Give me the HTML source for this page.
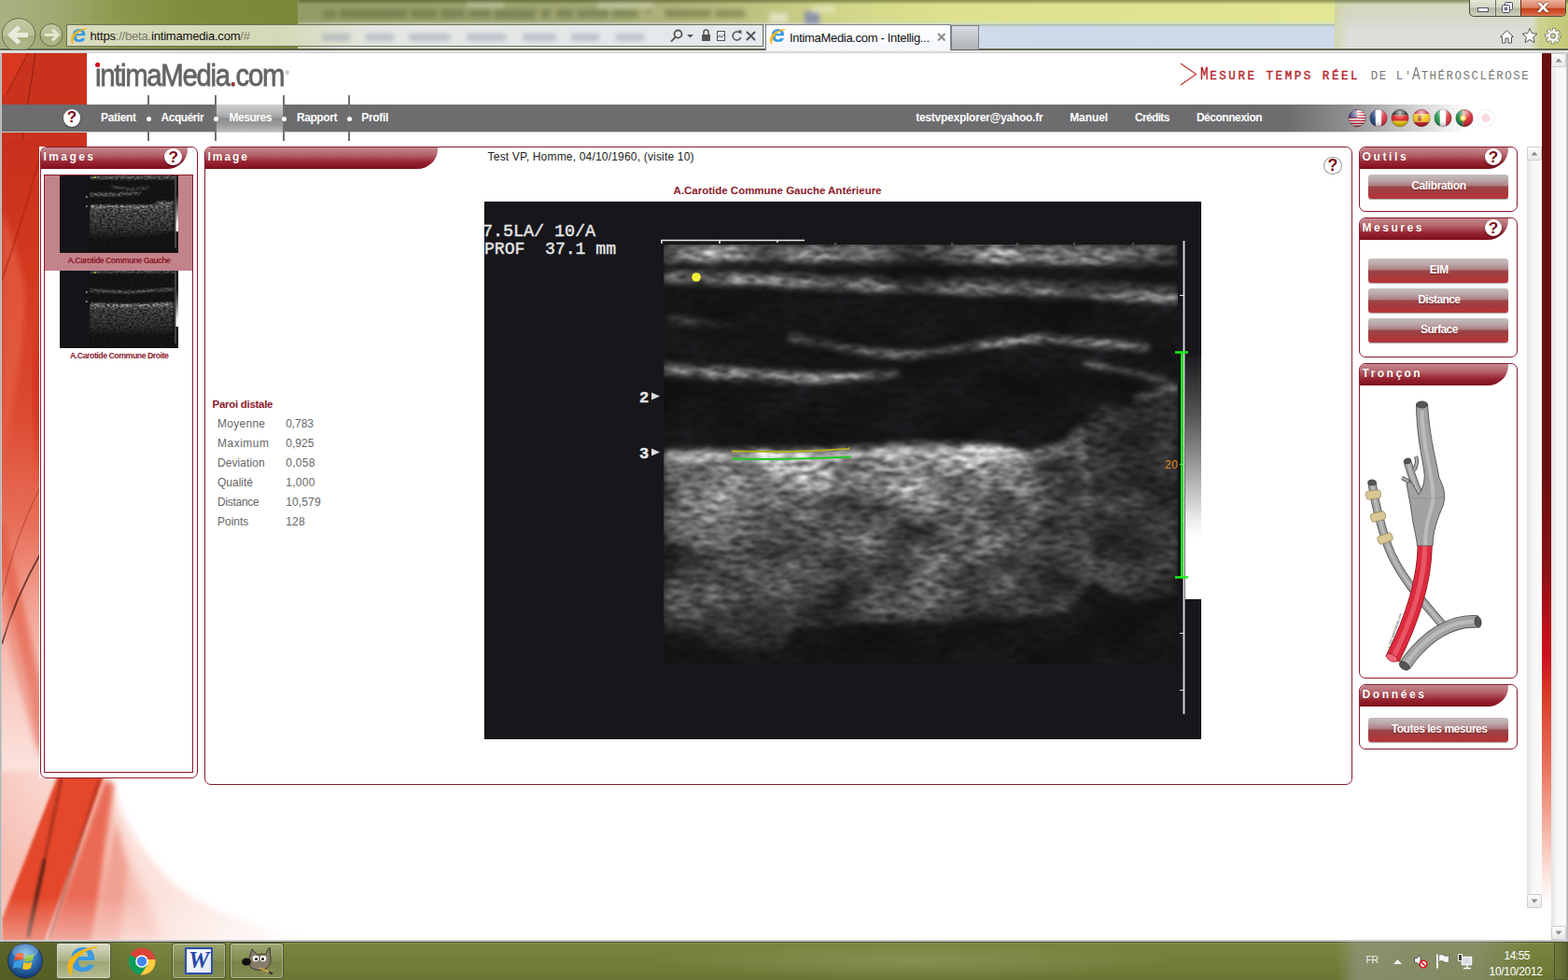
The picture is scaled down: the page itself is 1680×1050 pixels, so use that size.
<!DOCTYPE html>
<html lang="fr"><head><meta charset="utf-8"><title>IntimaMedia.com - Intelligence</title>
<style>
html,body{margin:0;padding:0;background:#fff}
body{width:1680px;height:1050px;position:relative;overflow:hidden;font-family:"Liberation Sans",sans-serif}
div,svg{position:absolute;white-space:pre}
.abs{position:absolute}
.gl{position:absolute}
#logo{position:absolute;color:#636466;transform-origin:0 50%;letter-spacing:0;-webkit-text-stroke:.8px #636466}
.help{border-radius:50%;background:#fff;color:#7a0c18;font-weight:bold;text-align:center;font-family:"Liberation Sans",sans-serif}
.panel{box-sizing:border-box;border:1px solid #8b1a2b;background:#fff}
.tab{background:linear-gradient(180deg,#c58a90 0,#b5626b 35%,#96222f 70%,#7f0f1c 100%);border-bottom-right-radius:22px 21px}
.btn{border-radius:3px;background:linear-gradient(180deg,#c6bebe 0,#bba9aa 22%,#ae8285 44%,#9a4447 52%,#a63a3c 75%,#b73638 100%);box-shadow:0 1px 1px rgba(0,0,0,.35)}
</style></head>
<body>
<svg width="0" height="0" style="position:absolute;left:0;top:0"><defs>
<filter id="spk" x="0" y="0" width="100%" height="100%" color-interpolation-filters="sRGB">
<feGaussianBlur in="SourceGraphic" stdDeviation="3" result="bl"/>
<feTurbulence type="fractalNoise" baseFrequency="0.014 0.022" numOctaves="2" seed="11" result="c"/>
<feColorMatrix in="c" type="matrix" values="1.600 0 0 0 -0.300  1.600 0 0 0 -0.300  1.600 0 0 0 -0.300  0 0 0 0 1" result="cg"/>
<feComposite in="bl" in2="cg" operator="arithmetic" k1="1.400" k2="0.300" k3="0" k4="0" result="t"/>
<feTurbulence type="fractalNoise" baseFrequency="0.072 0.190" numOctaves="2" seed="7" result="n"/>
<feColorMatrix in="n" type="matrix" values="1.100 0 0 0 -0.050  1.100 0 0 0 -0.050  1.100 0 0 0 -0.050  0 0 0 0 1" result="ng"/>
<feComposite in="t" in2="ng" operator="arithmetic" k1="1.600" k2="0.120" k3="0" k4="0.055" result="o"/>
<feGaussianBlur in="o" stdDeviation="0.800"/>
</filter>
<filter id="spk2" x="0" y="0" width="100%" height="100%" color-interpolation-filters="sRGB">
<feGaussianBlur in="SourceGraphic" stdDeviation="0.900" result="bl"/>
<feTurbulence type="fractalNoise" baseFrequency="0.350 0.550" numOctaves="2" seed="3" result="n"/>
<feColorMatrix in="n" type="matrix" values="1.900 0 0 0 -0.450  1.900 0 0 0 -0.450  1.900 0 0 0 -0.450  0 0 0 0 1" result="ng"/>
<feComposite in="bl" in2="ng" operator="arithmetic" k1="1.150" k2="0.200" k3="0" k4="0.050"/>
</filter>
<filter id="ub" x="-5%" y="-200%" width="110%" height="500%"><feGaussianBlur stdDeviation="2.500"/></filter>
<linearGradient id="tgb" x1="0" y1="0" x2="0" y2="1"><stop offset="0" stop-color="#222"/><stop offset=".5" stop-color="#999"/><stop offset=".8" stop-color="#fff"/><stop offset="1" stop-color="#fff"/></linearGradient>
<linearGradient id="tg1" x1="0" y1="0" x2="0" y2="1"><stop offset="0" stop-color="#7a7a7a"/><stop offset=".2" stop-color="#484848"/><stop offset=".7" stop-color="#2e2e2e"/><stop offset="1" stop-color="#0c0c0c"/></linearGradient>
<linearGradient id="tg2" x1="0" y1="0" x2="0" y2="1"><stop offset="0" stop-color="#707070"/><stop offset=".2" stop-color="#3a3a3a"/><stop offset=".7" stop-color="#262626"/><stop offset="1" stop-color="#0c0c0c"/></linearGradient>
<linearGradient id="ug1" gradientUnits="userSpaceOnUse" x1="0" y1="268" x2="0" y2="490"><stop offset="0" stop-color="#8a8a8a"/><stop offset=".1" stop-color="#747474"/><stop offset=".3" stop-color="#555"/><stop offset=".6" stop-color="#414141"/><stop offset=".78" stop-color="#303030"/><stop offset=".9" stop-color="#1c1c1e"/><stop offset="1" stop-color="#08080a"/></linearGradient>
<linearGradient id="ug2" gradientUnits="userSpaceOnUse" x1="590" y1="0" x2="745" y2="0"><stop offset="0" stop-color="#08080a" stop-opacity="0"/><stop offset=".3" stop-color="#08080a" stop-opacity=".3"/><stop offset="1" stop-color="#08080a" stop-opacity=".4"/></linearGradient>
</defs></svg>
<svg class="abs" style="left:2px;top:57px" width="440" height="951" viewBox="2 57 440 951">
<defs>
<linearGradient id="lg1" gradientUnits="userSpaceOnUse" x1="0" y1="150" x2="0" y2="840"><stop offset="0" stop-color="#c9301c"/><stop offset=".2" stop-color="#d2391f"/><stop offset=".42" stop-color="#dc4a30"/><stop offset=".6" stop-color="#e8705a"/><stop offset=".72" stop-color="#f2a292"/><stop offset=".86" stop-color="#f8cdc4"/><stop offset="1" stop-color="#fce6e1"/></linearGradient>
<linearGradient id="lg3" gradientUnits="userSpaceOnUse" x1="60" y1="1000" x2="250" y2="880"><stop offset="0" stop-color="#f6bfb4"/><stop offset=".45" stop-color="#fbddd6"/><stop offset="1" stop-color="#fff"/></linearGradient>
<linearGradient id="lgw" x1="0" y1="0" x2="0" y2="1"><stop offset="0" stop-color="#fff" stop-opacity="0"/><stop offset="1" stop-color="#fff" stop-opacity=".42"/></linearGradient>
<filter id="b1"><feGaussianBlur stdDeviation=".7"/></filter>
<filter id="b3"><feGaussianBlur stdDeviation="3"/></filter>
<filter id="b6"><feGaussianBlur stdDeviation="6"/></filter>
<filter id="b2"><feGaussianBlur stdDeviation="1.500"/></filter>
<clipPath id="pgc"><rect x="2" y="57" width="440" height="951"/></clipPath>
</defs>
<g clip-path="url(#pgc)">
<rect x="2" y="57" width="91" height="100" fill="#c9321d"/>
<rect x="2" y="150" width="40" height="690" fill="url(#lg1)"/>
<path d="M2 57L30 57 8 100 2 104z" fill="#d8381f"/>
<path d="M30 57L7 100M38 57L24 150" stroke="#7a1a10" stroke-width="1" fill="none" opacity=".7"/>
<path d="M-4 560C10 620 30 700 50 800" stroke="#e04a32" stroke-width="16" fill="none" opacity=".55" filter="url(#b3)"/>
<path d="M2 690C12 655 28 620 44 592" stroke="#3a1410" stroke-width="1.800" fill="none" opacity=".7" filter="url(#b1)"/>
<path d="M2 640C10 600 24 560 44 520" stroke="#8a2a1c" stroke-width="1.200" fill="none" opacity=".45"/>
<path d="M2 225C14 260 26 290 27 320 26 380 12 440 2 500z" fill="#ea6a50" opacity=".55" filter="url(#b3)"/>
<path d="M44 330C34 380 30 430 44 520z" fill="#cc2414" opacity=".5" filter="url(#b3)"/>
<path d="M4 640C14 700 30 760 46 810" stroke="#e8705c" stroke-width="7" fill="none" opacity=".5" filter="url(#b3)"/>
<path d="M2 300C16 260 30 215 42 170" stroke="#a3220f" stroke-width="2" fill="none" opacity=".5"/>
<!-- lower swoosh -->
<rect x="2" y="833" width="440" height="175" fill="#fff"/>
<path d="M-10 826L117 826C128 878 160 925 192 951 228 980 290 1000 380 1012L-10 1012z" fill="url(#lg3)" filter="url(#b3)"/>
<path d="M112 833C122 880 140 930 175 1008L100 1008 118 900z" fill="#f4b3a6" opacity=".7" filter="url(#b6)"/>
<path d="M2 985L62 831 112 831 47 1010 2 1010z" fill="#e4462b" filter="url(#b2)"/>
<path d="M50 1010L112 836 122 840 100 1010z" fill="#ea6a55" filter="url(#b3)"/>
<path d="M98 1010L124 880 136 930 128 1010z" fill="#f09a8a" opacity=".8" filter="url(#b3)"/>
<path d="M30 1004L48 920" stroke="#2a1410" stroke-width="4" filter="url(#b2)" opacity=".75" fill="none"/><path d="M48 920L66 834" stroke="#5a1a12" stroke-width="2.500" filter="url(#b2)" opacity=".55" fill="none"/>
<path d="M53 1006L106 836" stroke="#6a1a12" stroke-width="1.500" filter="url(#b2)" opacity=".7" fill="none"/>
<rect x="2" y="960" width="440" height="48" fill="url(#lgw)"/>
</g>
</svg>
<div class="abs" style="left:42px;top:157px;width:1594px;height:676px;background:#fff"></div>
<div class="abs" style="left:93px;top:57px;width:1559px;height:100px;background:#fff"></div>

<div id="logo" style="left:102px;top:62px;font-size:33.5px;line-height:37px;transform:scaleX(0.8756);letter-spacing:-1.5px;">intimaMedia<span style="color:#d0021b">.</span>com</div>
<div class="abs" style="left:102px;top:67px;width:5px;height:5px;border-radius:50%;background:#d80a22"></div>
<div style="left:305.50px;top:75.00px;font-size:6px;line-height:6px;letter-spacing:0.000px;color:#666;">®</div>
<svg class="abs" style="left:1262px;top:65px" width="24" height="30" viewBox="1262 65 24 30"><path d="M1265 68L1281.500 79.500 1265 91" fill="none" stroke="#c8403c" stroke-width="1.400"/></svg>
<div id="slogan" style="left:1286.2px;top:68px;font-family:'Liberation Mono',monospace;text-transform:uppercase;white-space:pre;line-height:24px;height:24px;font-size:12.5px;color:#b5262c;-webkit-text-stroke:.4px #b5262c;letter-spacing:2.55px"><span style="display:inline-block;width:7.50px;margin:0 3.05px 0 -0.5px;font-size:19.5px;letter-spacing:0;transform:scaleX(.74);transform-origin:0 100%">M</span>esure temps réel</div>
<div id="slogan2" style="left:1468.8px;top:68px;font-family:'Liberation Mono',monospace;text-transform:uppercase;white-space:pre;line-height:24px;height:24px;font-size:12.5px;color:#77787a;letter-spacing:1.47px">de l'<span style="display:inline-block;width:7.50px;margin:0 1.97px 0 -0.5px;font-size:19.5px;letter-spacing:0;transform:scaleX(.74);transform-origin:0 100%">A</span>thérosclérose</div>
<div class="abs" style="left:2px;top:112px;width:1650px;height:29px;background:linear-gradient(90deg,#6d6d6f 0,#6d6d6f 1376px,#8e8e90 1440px,#c6c6c7 1500px,#fff 1570px,#fff 100%)"></div>
<div class="abs" style="left:2px;top:141px;width:1560px;height:1px;background:linear-gradient(90deg,#cdd2d2 0,#cdd2d2 1380px,#fff 1560px)"></div>
<div class="abs" style="left:231px;top:112px;width:73px;height:29px;background:linear-gradient(180deg,#cfcfcf 0,#bdbdbd 25%,#a0a0a0 48%,#8d8d8d 52%,#9b9b9b 75%,#bcbcbc 100%)"></div>
<div class="abs" style="left:158px;top:102px;width:2px;height:49px;background:#727274"></div>
<div class="abs" style="left:156.5px;top:124.500px;width:5px;height:5px;border-radius:50%;background:#fff"></div>
<div class="abs" style="left:230px;top:102px;width:2px;height:49px;background:#727274"></div>
<div class="abs" style="left:228.5px;top:124.500px;width:5px;height:5px;border-radius:50%;background:#fff"></div>
<div class="abs" style="left:303px;top:102px;width:2px;height:49px;background:#727274"></div>
<div class="abs" style="left:301.5px;top:124.500px;width:5px;height:5px;border-radius:50%;background:#fff"></div>
<div class="abs" style="left:373px;top:102px;width:2px;height:49px;background:#727274"></div>
<div class="abs" style="left:371.5px;top:124.500px;width:5px;height:5px;border-radius:50%;background:#fff"></div>
<div class="help" style="left:67.8px;top:117.2px;width:18.4px;height:18.4px;font-size:17.0px;line-height:18.9px;box-shadow:0 1px 2px rgba(0,0,0,.5);">?</div>
<div style="left:108.00px;top:118.90px;font-size:12px;line-height:14px;letter-spacing:-0.335px;color:#fff;font-weight:bold;">Patient</div>
<div style="left:172.50px;top:118.90px;font-size:12px;line-height:14px;letter-spacing:-0.464px;color:#fff;font-weight:bold;">Acquérir</div>
<div style="left:245.40px;top:118.90px;font-size:12px;line-height:14px;letter-spacing:-0.449px;color:#fff;font-weight:bold;">Mesures</div>
<div style="left:318.00px;top:118.90px;font-size:12px;line-height:14px;letter-spacing:-0.433px;color:#fff;font-weight:bold;">Rapport</div>
<div style="left:387.30px;top:118.90px;font-size:12px;line-height:14px;letter-spacing:-0.314px;color:#fff;font-weight:bold;">Profil</div>
<div style="left:981.20px;top:118.90px;font-size:12px;line-height:14px;letter-spacing:-0.243px;color:#fff;font-weight:bold;">testvpexplorer@yahoo.fr</div>
<div style="left:1146.20px;top:118.90px;font-size:12px;line-height:14px;letter-spacing:-0.088px;color:#fff;font-weight:bold;">Manuel</div>
<div style="left:1216.00px;top:118.90px;font-size:12px;line-height:14px;letter-spacing:-0.674px;color:#fff;font-weight:bold;">Crédits</div>
<div style="left:1281.90px;top:118.90px;font-size:12px;line-height:14px;letter-spacing:-0.465px;color:#fff;font-weight:bold;">Déconnexion</div>
<svg class="abs" style="left:1440px;top:114px" width="170" height="26" viewBox="1440 114 170 26"><defs><radialGradient id="gloss" cx=".5" cy=".2" r=".75"><stop offset="0" stop-color="#fff" stop-opacity=".75"/><stop offset=".55" stop-color="#fff" stop-opacity=".1"/><stop offset="1" stop-color="#000" stop-opacity=".28"/></radialGradient><clipPath id="cus"><circle cx="1454" cy="126.500" r="9.300"/></clipPath><clipPath id="cfr"><circle cx="1477" cy="126.500" r="9.300"/></clipPath><clipPath id="cde"><circle cx="1500" cy="126.500" r="9.300"/></clipPath><clipPath id="ces"><circle cx="1523" cy="126.500" r="9.300"/></clipPath><clipPath id="cit"><circle cx="1546" cy="126.500" r="9.300"/></clipPath><clipPath id="cpt"><circle cx="1569" cy="126.500" r="9.300"/></clipPath><clipPath id="cjp"><circle cx="1592" cy="126.500" r="9.300"/></clipPath></defs><g clip-path="url(#cus)"><rect x="1444.5" y="117.00" width="19" height="1.46" fill="#c8102e"/><rect x="1444.5" y="118.46" width="19" height="1.46" fill="#fff"/><rect x="1444.5" y="119.92" width="19" height="1.46" fill="#c8102e"/><rect x="1444.5" y="121.38" width="19" height="1.46" fill="#fff"/><rect x="1444.5" y="122.85" width="19" height="1.46" fill="#c8102e"/><rect x="1444.5" y="124.31" width="19" height="1.46" fill="#fff"/><rect x="1444.5" y="125.77" width="19" height="1.46" fill="#c8102e"/><rect x="1444.5" y="127.23" width="19" height="1.46" fill="#fff"/><rect x="1444.5" y="128.69" width="19" height="1.46" fill="#c8102e"/><rect x="1444.5" y="130.15" width="19" height="1.46" fill="#fff"/><rect x="1444.5" y="131.62" width="19" height="1.46" fill="#c8102e"/><rect x="1444.5" y="133.08" width="19" height="1.46" fill="#fff"/><rect x="1444.5" y="134.54" width="19" height="1.46" fill="#c8102e"/></g><g clip-path="url(#cus)"><rect x="1444" y="116" width="10" height="10.500" fill="#3c3b6e"/></g><g clip-path="url(#cfr)"><rect x="1467.50" y="116" width="6.33" height="21" fill="#1b3a7a"/><rect x="1473.83" y="116" width="6.33" height="21" fill="#fff"/><rect x="1480.17" y="116" width="6.33" height="21" fill="#d8283a"/></g><g clip-path="url(#cde)"><rect x="1490.5" y="117.00" width="19" height="6.33" fill="#111"/><rect x="1490.5" y="123.33" width="19" height="6.33" fill="#d41a1a"/><rect x="1490.5" y="129.67" width="19" height="6.33" fill="#f4c400"/></g><g clip-path="url(#ces)"><rect x="1513.5" y="117.00" width="19" height="5.13" fill="#c8192c"/><rect x="1513.5" y="122.13" width="19" height="8.74" fill="#f5c218"/><rect x="1513.5" y="130.87" width="19" height="5.13" fill="#c8192c"/></g><rect x="1519" y="123.500" width="4" height="6" fill="#b0552a"/><g clip-path="url(#cit)"><rect x="1536.50" y="116" width="6.33" height="21" fill="#1a8f45"/><rect x="1542.83" y="116" width="6.33" height="21" fill="#fff"/><rect x="1549.17" y="116" width="6.33" height="21" fill="#cf2b37"/></g><g clip-path="url(#cpt)"><rect x="1559.50" y="116" width="7.98" height="21" fill="#17803d"/><rect x="1567.48" y="116" width="11.02" height="21" fill="#d3202c"/></g><circle cx="1567.500" cy="126.500" r="3.200" fill="#f5d21c"/><circle cx="1567.500" cy="126.500" r="1.600" fill="#fff"/><circle cx="1592" cy="126.500" r="9.300" fill="#fff" stroke="#f0f0f0"/><circle cx="1592" cy="126.500" r="4.500" fill="#f7d9dd"/><circle cx="1454" cy="126.500" r="9.300" fill="url(#gloss)" stroke="rgba(0,0,0,.25)" stroke-width=".8"/><circle cx="1477" cy="126.500" r="9.300" fill="url(#gloss)" stroke="rgba(0,0,0,.25)" stroke-width=".8"/><circle cx="1500" cy="126.500" r="9.300" fill="url(#gloss)" stroke="rgba(0,0,0,.25)" stroke-width=".8"/><circle cx="1523" cy="126.500" r="9.300" fill="url(#gloss)" stroke="rgba(0,0,0,.25)" stroke-width=".8"/><circle cx="1546" cy="126.500" r="9.300" fill="url(#gloss)" stroke="rgba(0,0,0,.25)" stroke-width=".8"/><circle cx="1569" cy="126.500" r="9.300" fill="url(#gloss)" stroke="rgba(0,0,0,.25)" stroke-width=".8"/></svg>
<div class="panel" style="left:43px;top:157px;width:169px;height:677px;border-radius:7px"></div>
<div class="tab" style="left:44px;top:158px;width:157px;height:23px;border-top-left-radius:6px"></div>
<div style="left:46.50px;top:161.20px;font-size:12px;line-height:14px;letter-spacing:2.429px;color:#fff;font-weight:bold;text-shadow:0 0 1px rgba(90,0,10,.6);">Images</div>
<div class="help" style="left:176.4px;top:158.7px;width:18.6px;height:18.6px;font-size:17.2px;line-height:19.1px;box-shadow:0 1px 2px rgba(0,0,0,.5);">?</div>
<div class="abs" style="left:47px;top:187px;width:160px;height:641px;box-sizing:border-box;border:1px solid #8b1a2b;background:#fff"></div>
<div class="abs" style="left:48px;top:188px;width:158px;height:102px;background:#c3838a"></div>
<svg class="abs" style="left:64px;top:188px" width="127" height="83" viewBox="0 0 127 83"><rect width="127" height="83" fill="#141419"/><clipPath id="tcl"><rect x="32" y="0" width="91" height="83"/></clipPath><g clip-path="url(#tcl)"><g filter="url(#spk2)"><rect x="20" y="-5" width="120" height="95" fill="#08080a"/><rect x="32" y="0" width="92" height="4" fill="#5a5a5a"/><path d="M32 19h25l30-1v2l-30 2H32z" fill="#6a6a6a"/><path d="M55 12l20 3 20-2" stroke="#606060" stroke-width="1.500" fill="none"/><path d="M32 32h68l5-4 17 0v32l-20 4-40 3-30 0z" fill="url(#tg1)"/><path d="M32 33h68" stroke="#aaa" stroke-width="2"/></g></g><rect x="123.500" y="0" width="1" height="78" fill="#777"/><rect x="124.500" y="22" width="2.500" height="38" fill="url(#tgb)"/><rect x="37" y="1.500" width="1.500" height="1.500" fill="#e8e020"/><path d="M28 22l2.500 1-2.500 1zM28 32l2.500 1-2.500 1z" fill="#bbb"/></svg>
<div style="left:72.60px;top:274.00px;font-size:8.8px;line-height:10px;letter-spacing:-0.595px;color:#8b1a2b;font-weight:bold;">A.Carotide Commune Gauche</div>
<svg class="abs" style="left:64px;top:290px" width="127" height="83" viewBox="0 0 127 83"><rect width="127" height="83" fill="#141419"/><clipPath id="tcl"><rect x="32" y="0" width="91" height="83"/></clipPath><g clip-path="url(#tcl)"><g filter="url(#spk2)"><rect x="20" y="-5" width="120" height="95" fill="#08080a"/><rect x="32" y="0" width="92" height="2" fill="#666"/><path d="M32 20l40 2 50-3v2l-50 3-40-2z" fill="#7a7a7a"/><path d="M32 36l50 1 40-2v32l-30 2-60-2z" fill="url(#tg2)"/><path d="M32 36l50 1 40-2" stroke="#999" stroke-width="2" fill="none"/></g></g><rect x="123.500" y="0" width="1" height="78" fill="#777"/><rect x="124.500" y="22" width="2.500" height="38" fill="url(#tgb)"/><rect x="37" y="1.500" width="1.500" height="1.500" fill="#e8e020"/><path d="M28 22l2.500 1-2.500 1zM28 32l2.500 1-2.500 1z" fill="#bbb"/></svg>
<div style="left:75.00px;top:376.00px;font-size:8.8px;line-height:10px;letter-spacing:-0.493px;color:#8b1a2b;font-weight:bold;">A.Carotide Commune Droite</div>
<div class="panel" style="left:219px;top:157px;width:1230px;height:684px;border-radius:7px"></div>
<div class="tab" style="left:220px;top:158px;width:249px;height:23px;border-top-left-radius:6px"></div>
<div style="left:222.50px;top:161.20px;font-size:12px;line-height:14px;letter-spacing:1.955px;color:#fff;font-weight:bold;text-shadow:0 0 1px rgba(90,0,10,.6);">Image</div>
<div class="help" style="left:1418.4px;top:168.1px;width:19.2px;height:19.2px;font-size:17.8px;line-height:19.7px;box-shadow:0 0 0 1px #999 inset;">?</div>
<div style="left:522.60px;top:160.60px;font-size:12px;line-height:14px;letter-spacing:0.187px;color:#222;">Test VP, Homme, 04/10/1960, (visite 10)</div>
<div style="left:721.60px;top:197.80px;font-size:11.5px;line-height:12px;letter-spacing:-0.009px;color:#8b1a2b;font-weight:bold;">A.Carotide Commune Gauche Antérieure</div>
<div style="left:227.50px;top:426.60px;font-size:11.5px;line-height:12px;letter-spacing:-0.282px;color:#8b1a2b;font-weight:bold;">Paroi distale</div>
<div style="left:233.00px;top:447.20px;font-size:12px;line-height:14px;letter-spacing:0.272px;color:#666;">Moyenne</div>
<div style="left:306.20px;top:447.20px;font-size:12px;line-height:14px;letter-spacing:-0.057px;color:#666;">0,783</div>
<div style="left:233.00px;top:468.20px;font-size:12px;line-height:14px;letter-spacing:0.500px;color:#666;">Maximum</div>
<div style="left:306.20px;top:468.20px;font-size:12px;line-height:14px;letter-spacing:0.068px;color:#666;">0,925</div>
<div style="left:233.00px;top:489.20px;font-size:12px;line-height:14px;letter-spacing:0.072px;color:#666;">Deviation</div>
<div style="left:306.20px;top:489.20px;font-size:12px;line-height:14px;letter-spacing:0.318px;color:#666;">0,058</div>
<div style="left:233.00px;top:510.20px;font-size:12px;line-height:14px;letter-spacing:-0.004px;color:#666;">Qualité</div>
<div style="left:306.20px;top:510.20px;font-size:12px;line-height:14px;letter-spacing:0.318px;color:#666;">1,000</div>
<div style="left:233.00px;top:531.20px;font-size:12px;line-height:14px;letter-spacing:-0.284px;color:#666;">Distance</div>
<div style="left:306.20px;top:531.20px;font-size:12px;line-height:14px;letter-spacing:0.139px;color:#666;">10,579</div>
<div style="left:233.00px;top:552.20px;font-size:12px;line-height:14px;letter-spacing:-0.010px;color:#666;">Points</div>
<div style="left:306.20px;top:552.20px;font-size:12px;line-height:14px;letter-spacing:0.189px;color:#666;">128</div>
<svg class="abs" style="left:519px;top:216px" width="768" height="576" viewBox="0 0 768 576"><rect width="768" height="576" fill="#000"/><rect x="1" y="1" width="766" height="574" fill="#16161b"/><clipPath id="sect"><rect x="192" y="46" width="551" height="450"/></clipPath><g clip-path="url(#sect)"><g filter="url(#spk)"><rect x="150" y="20" width="640" height="500" fill="#08080a"/><path d="M192 46H743V70L640 67 540 66 400 66 300 64 192 65z" fill="#626262"/><path d="M192 73L743 90V96L192 79z" fill="#3a3a3a"/><path d="M192 78L743 99V108L192 86z" fill="#747474"/><path d="M195 122l50 5 25 4-25 4-50-6z" fill="#3a3a3a"/><path d="M329 146C350 150 370 154 391 157 415 162 440 165 458 164 480 162 500 158 521 155 540 152 560 150 575 149 585 147 595 146 602 146 612 147 620 148 629 149L709 156" stroke="#6e6e6e" stroke-width="6.500" fill="none" stroke-linecap="round"/><path d="M440 164.500C470 164 500 158 530 154 560 150 590 146 610 146.500" stroke="#8a8a8a" stroke-width="5" fill="none" stroke-linecap="round"/><path d="M192 175L271 179 360 184 445 183 445 186 360 194 271 191 192 186z" fill="#727272"/><path d="M642 173L731 191" stroke="#5c5c5c" stroke-width="5" fill="none"/><path d="M696 213L743 197" stroke="#7a7a7a" stroke-width="8" fill="none"/><path d="M640 240L662 216 700 224 743 204V422L700 428 655 410z" fill="#363636"/><path d="M192 267L391 264 467 258 539 260 584 269 619 258 640 240 650 300 655 400 630 437 560 448 400 452 330 456 322 479 192 480z" fill="url(#ug1)"/><path d="M192 270L391 267 467 261 539 263 584 272 612 265V274L584 281 539 273 467 271 391 278 192 282z" fill="#a4a4a4"/><rect x="590" y="200" width="160" height="260" fill="url(#ug2)"/></g><path d="M192 276L391 273 467 267 539 269 580 277" stroke="#dcdcdc" stroke-width="6" fill="none" opacity=".45" filter="url(#ub)"/></g><rect x="1" y="1" width="191" height="574" fill="#16161b"/><path d="M189 41.500H343M190 41v4M252 41v4M314 41v3" stroke="#e8e8e8" stroke-width="1.500" fill="none"/><path d="M376 44v2M501 44v2M571 44v2M632 44v2M695 44v2" stroke="#999" stroke-width="1" fill="none"/><rect x="751" y="164" width="17" height="262" fill="url(#gb)"/><defs><linearGradient id="gb" x1="0" y1="0" x2="0" y2="1"><stop offset="0" stop-color="#1a1a1e"/><stop offset=".25" stop-color="#555"/><stop offset=".45" stop-color="#999"/><stop offset=".68" stop-color="#eee"/><stop offset=".75" stop-color="#fff"/><stop offset="1" stop-color="#fff"/></linearGradient></defs><path d="M749.500 42V549" stroke="#e4e4e4" stroke-width="1.800"/><path d="M745 100.500h4M745 281.500h4M746 342h3M745 462.500h4M745 523.500h4" stroke="#ddd" stroke-width="1.200"/><path d="M747.300 161V403M740 161.500h14M740 402.500h14" stroke="#1ef01e" stroke-width="2.600" fill="none"/><circle cx="227" cy="81" r="4.800" fill="#f1ee35"/><path d="M265 267.500l60 .5 30-1 35-2 1-1.500" stroke="#b4ac20" stroke-width="1.800" fill="none"/><path d="M265 275.500l40 .5 30-.5 20-.5 38-1.500" stroke="#22c822" stroke-width="1.800" fill="none"/><path d="M179 204.500l9 4-9 4zM179 264.500l9 4-9 4z" fill="#ddd"/><g font-family="Liberation Mono,monospace" fill="#e6e6e6" stroke="#e6e6e6" stroke-width=".45"><text x="-2" y="36.500" font-size="18.500" textLength="121" lengthAdjust="spacingAndGlyphs">7.5LA/ 10/A</text><text x="0" y="56" font-size="18.500" textLength="141" lengthAdjust="spacingAndGlyphs" style="white-space:pre">PROF  37.1 mm</text><text x="166" y="215" font-size="17" font-weight="bold">2</text><text x="166" y="275" font-size="17" font-weight="bold">3</text></g><text x="729" y="286" font-size="12" font-family="Liberation Sans,sans-serif" fill="#e8861c" textLength="14">20</text></svg>
<div class="panel" style="left:1456px;top:157px;width:170px;height:70px;border-radius:7px"></div>
<div class="tab" style="left:1457px;top:158px;width:159px;height:23px;border-top-left-radius:6px"></div>
<div style="left:1459.50px;top:161.20px;font-size:12px;line-height:14px;letter-spacing:2.640px;color:#fff;font-weight:bold;text-shadow:0 0 1px rgba(90,0,10,.6);">Outils</div>
<div class="help" style="left:1590.7px;top:158.7px;width:18.6px;height:18.6px;font-size:17.2px;line-height:19.1px;box-shadow:0 1px 2px rgba(0,0,0,.5);">?</div>
<div class="btn" style="left:1466px;top:187px;width:150px;height:26px"></div><div style="left:1512.30px;top:191.80px;font-size:12px;line-height:14px;letter-spacing:-0.397px;color:#fff;font-weight:bold;text-shadow:0 1px 1px rgba(80,0,0,.5);">Calibration</div>
<div class="panel" style="left:1456px;top:233px;width:170px;height:150px;border-radius:7px"></div>
<div class="tab" style="left:1457px;top:234px;width:159px;height:23px;border-top-left-radius:6px"></div>
<div style="left:1459.50px;top:237.20px;font-size:12px;line-height:14px;letter-spacing:2.518px;color:#fff;font-weight:bold;text-shadow:0 0 1px rgba(90,0,10,.6);">Mesures</div>
<div class="help" style="left:1590.7px;top:234.7px;width:18.6px;height:18.6px;font-size:17.2px;line-height:19.1px;box-shadow:0 1px 2px rgba(0,0,0,.5);">?</div>
<div class="btn" style="left:1466px;top:277px;width:150px;height:26px"></div><div style="left:1531.70px;top:281.60px;font-size:12px;line-height:14px;letter-spacing:-0.367px;color:#fff;font-weight:bold;text-shadow:0 1px 1px rgba(80,0,0,.5);">EIM</div>
<div class="btn" style="left:1466px;top:309px;width:150px;height:26px"></div><div style="left:1519.30px;top:313.60px;font-size:12px;line-height:14px;letter-spacing:-0.617px;color:#fff;font-weight:bold;text-shadow:0 1px 1px rgba(80,0,0,.5);">Distance</div>
<div class="btn" style="left:1466px;top:341px;width:150px;height:26px"></div><div style="left:1522.00px;top:345.80px;font-size:12px;line-height:14px;letter-spacing:-0.620px;color:#fff;font-weight:bold;text-shadow:0 1px 1px rgba(80,0,0,.5);">Surface</div>
<div class="panel" style="left:1456px;top:389px;width:170px;height:338px;border-radius:7px"></div>
<div class="tab" style="left:1457px;top:390px;width:159px;height:23px;border-top-left-radius:6px"></div>
<div style="left:1459.50px;top:393.20px;font-size:12px;line-height:14px;letter-spacing:2.478px;color:#fff;font-weight:bold;text-shadow:0 0 1px rgba(90,0,10,.6);">Tronçon</div>
<div class="panel" style="left:1456px;top:733px;width:170px;height:70px;border-radius:7px"></div>
<div class="tab" style="left:1457px;top:734px;width:159px;height:23px;border-top-left-radius:6px"></div>
<div style="left:1459.50px;top:737.20px;font-size:12px;line-height:14px;letter-spacing:2.637px;color:#fff;font-weight:bold;text-shadow:0 0 1px rgba(90,0,10,.6);">Données</div>
<div class="btn" style="left:1466px;top:769px;width:150px;height:26px"></div><div style="left:1490.70px;top:774.00px;font-size:12px;line-height:14px;letter-spacing:-0.462px;color:#fff;font-weight:bold;text-shadow:0 1px 1px rgba(80,0,0,.5);">Toutes les mesures</div>
<svg class="abs" style="left:1458px;top:414px" width="166" height="310" viewBox="1458 414 166 310" fill="none" stroke-linecap="butt"><path d="M1470 517C1474 545 1480 565 1487 585 1498 615 1522 642 1547 671" stroke="#4a4a4a" stroke-width="9.1"/><path d="M1470 517C1474 545 1480 565 1487 585 1498 615 1522 642 1547 671" stroke="#a2a2a2" stroke-width="7.5"/><path d="M1470 517C1474 545 1480 565 1487 585 1498 615 1522 642 1547 671" stroke="#c4c4c4" stroke-width="2.6" opacity=".7"/><path d="M1583 666C1556 664 1528 680 1505 713" stroke="#4a4a4a" stroke-width="13.6"/><path d="M1583 666C1556 664 1528 680 1505 713" stroke="#a2a2a2" stroke-width="12"/><path d="M1583 666C1556 664 1528 680 1505 713" stroke="#c4c4c4" stroke-width="4.2" opacity=".7"/><path d="M1508 495C1512 506 1514 516 1520 528" stroke="#4a4a4a" stroke-width="8.6"/><path d="M1508 495C1512 506 1514 516 1520 528" stroke="#a2a2a2" stroke-width="7"/><path d="M1508 495C1512 506 1514 516 1520 528" stroke="#c4c4c4" stroke-width="2.4" opacity=".7"/><path d="M1517 489C1519 494 1518 499 1515 504" stroke="#4a4a4a" stroke-width="4.1"/><path d="M1517 489C1519 494 1518 499 1515 504" stroke="#a2a2a2" stroke-width="2.5"/><path d="M1517 489C1519 494 1518 499 1515 504" stroke="#c4c4c4" stroke-width="0.9" opacity=".7"/><path d="M1502 512C1507 514 1510 516 1512 520" stroke="#4a4a4a" stroke-width="4.1"/><path d="M1502 512C1507 514 1510 516 1512 520" stroke="#a2a2a2" stroke-width="2.5"/><path d="M1502 512C1507 514 1510 516 1512 520" stroke="#c4c4c4" stroke-width="0.9" opacity=".7"/><path d="M1517.500 433C1518 470 1524 490 1526 506 1527 516 1524 524 1520 530L1512 516 1507 518C1510 535 1512 545 1514 560 1516 570 1518 578 1518.500 585L1535 585C1535 570 1540 556 1546 542 1550 530 1546 520 1542 512 1538 490 1532 470 1529.500 433z" fill="#a2a2a2" stroke="#4a4a4a" stroke-width=".9"/><path d="M1523.500 440C1524 470 1530 490 1533 510 1535 525 1538 535 1532 550 1529 560 1527 570 1527 584" stroke="#c6c6c6" stroke-width="4" opacity=".7"/><path d="M1511 533q18 3 37-1" stroke="#666" stroke-width=".5" stroke-dasharray="1.500 1"/><path d="M1526.700 585C1526 625 1510 670 1492 706" stroke="#8a1420" stroke-width="16.1"/><path d="M1526.700 585C1526 625 1510 670 1492 706" stroke="#dc2a3c" stroke-width="14.5"/><path d="M1526.700 585C1526 625 1510 670 1492 706" stroke="#ec6a78" stroke-width="5.1" opacity=".7"/><ellipse cx="1523.500" cy="433.500" rx="6" ry="3.600" fill="#555" stroke="#333" stroke-width=".7"/><ellipse cx="1508" cy="494" rx="4" ry="2.800" fill="#555" stroke="#333" stroke-width=".7" transform="rotate(-20 1508 494)"/><ellipse cx="1470" cy="517" rx="4.300" ry="3" fill="#555" stroke="#333" stroke-width=".7"/><ellipse cx="1583.500" cy="666.500" rx="3.500" ry="6" fill="#555" stroke="#333" stroke-width=".7" transform="rotate(-8 1583 666)"/><ellipse cx="1505" cy="713.500" rx="6" ry="3.800" fill="#555" stroke="#333" stroke-width=".7" transform="rotate(35 1505 713)"/><ellipse cx="1491.500" cy="704.500" rx="6.500" ry="3.600" fill="#f2667a" stroke="#8a1420" stroke-width=".7" transform="rotate(28 1491 704)"/><rect x="1463.5" y="525.5" width="16" height="9" rx="3" fill="#d9c896" stroke="#8a7a4a" stroke-width=".6" transform="rotate(-8 1471.5 530)"/><rect x="1468.5" y="549.0" width="16" height="9" rx="3" fill="#d9c896" stroke="#8a7a4a" stroke-width=".6" transform="rotate(-14 1476.5 553.5)"/><rect x="1476" y="572.5" width="16" height="9" rx="3" fill="#d9c896" stroke="#8a7a4a" stroke-width=".6" transform="rotate(-20 1484 577)"/><text x="0" y="0" transform="translate(1489 695) rotate(-71)" font-family="Liberation Sans,sans-serif" font-size="3.600" fill="#333" stroke="none">© 2011 IntimaMedia.com</text></svg>
<div class="abs" style="left:1652px;top:57px;width:10px;height:951px;background:linear-gradient(180deg,#6a0f10 0,#6a0f10 48%,#8a1216 58%,#c0101a 65.5%,#cc1020 68%,#d83a28 72%,#e8705a 80%,#f4b0a0 87%,#fde8e2 93%,#fff 96%)"></div>
<div class="abs" style="left:1636px;top:157px;width:16px;height:816px;background:linear-gradient(90deg,#e3e3e3,#f7f7f7 40%,#fafafa)"></div><div class="abs" style="left:1636px;top:157px;width:16px;height:15px;box-sizing:border-box;border:1px solid #cfcfcf;border-radius:2px;background:linear-gradient(180deg,#fafafa,#e9e9e9)"></div><svg class="abs" style="left:1636px;top:157px" width="16" height="15"><path d="M4.500 9.500l3.500-4 3.500 4z" fill="#8a8a8a"/></svg><div class="abs" style="left:1636px;top:958px;width:16px;height:15px;box-sizing:border-box;border:1px solid #cfcfcf;border-radius:2px;background:linear-gradient(180deg,#fafafa,#e9e9e9)"></div><svg class="abs" style="left:1636px;top:958px" width="16" height="15"><path d="M4.500 5.500l3.500 4 3.500-4z" fill="#8a8a8a"/></svg>
<div class="abs" style="left:1662px;top:57px;width:16px;height:950px;background:linear-gradient(90deg,#e3e3e3,#f7f7f7 40%,#fafafa)"></div><div class="abs" style="left:1662px;top:57px;width:16px;height:15px;box-sizing:border-box;border:1px solid #cfcfcf;border-radius:2px;background:linear-gradient(180deg,#fafafa,#e9e9e9)"></div><svg class="abs" style="left:1662px;top:57px" width="16" height="15"><path d="M4.500 9.500l3.500-4 3.500 4z" fill="#8a8a8a"/></svg><div class="abs" style="left:1662px;top:992px;width:16px;height:15px;box-sizing:border-box;border:1px solid #cfcfcf;border-radius:2px;background:linear-gradient(180deg,#fafafa,#e9e9e9)"></div><svg class="abs" style="left:1662px;top:992px" width="16" height="15"><path d="M4.500 5.500l3.500 4 3.500-4z" fill="#8a8a8a"/></svg>
<div class="abs" style="left:0;top:54px;width:2px;height:954px;background:linear-gradient(90deg,#adadad,#cfcfcf)"></div>
<div class="abs" style="left:1678px;top:54px;width:2px;height:954px;background:linear-gradient(90deg,#cfcfcf,#adadad)"></div>
<div id="glass">
<div class="gl" style="left:0;top:0;width:1680px;height:57px;background:linear-gradient(90deg,#aab184 0,#a0a972 60px,#8c974c 130px,#808c3d 200px,#7b8738 330px,#7b8738 100%)"></div>
<div class="gl" style="left:319px;top:0;width:1121px;height:26px;background:linear-gradient(90deg,#949b66 0,#9aa06c 150px,#a4a976 330px,#bcc080 480px,#d4d88a 600px,#dde18e 700px,#e3e793 1110px)"></div>
<div class="gl" style="left:319px;top:22px;width:1121px;height:32px;background:linear-gradient(90deg,#cfd2b4 0,#dde2e8 60px,#d9dfea 500px,#cdd9ea 800px,#cfdaea 1110px);-webkit-mask-image:linear-gradient(180deg,transparent 0,#000 7px);mask-image:linear-gradient(180deg,transparent 0,#000 7px)"></div>
<div class="gl" style="left:1430px;top:0;width:215px;height:54px;background:linear-gradient(180deg,#d5d7b4 0,#d6d7c6 30%,#dcdcd8 60%,#e0e0de 100%)"></div>
<div class="gl" style="left:1430px;top:0;width:14px;height:54px;background:linear-gradient(90deg,rgba(210,214,170,1),rgba(214,215,198,0))"></div>
<div class="gl" style="left:1640px;top:0;width:40px;height:54px;background:linear-gradient(90deg,#dcdcd4 0,#cdd18c 10px,#c3c878 40px)"></div>
<div class="gl" style="left:320px;top:0;width:1360px;height:5px;background:linear-gradient(180deg,rgba(60,70,20,.55),rgba(60,70,20,0))"></div>
<svg class="gl" style="left:300px;top:0" width="800" height="54" viewBox="300 0 800 54"><defs><filter id="gb4" x="-5%" y="-100%" width="110%" height="300%"><feGaussianBlur stdDeviation="2.500"/></filter></defs>
<g filter="url(#gb4)" fill="#4c5228" opacity=".38">
<rect x="346" y="11" width="14" height="8"/><rect x="364" y="10" width="72" height="9"/><rect x="440" y="10" width="28" height="9"/><rect x="472" y="10" width="26" height="9"/><rect x="502" y="10" width="24" height="9"/><rect x="530" y="10" width="44" height="10"/><rect x="580" y="10" width="10" height="9"/><rect x="596" y="10" width="18" height="9"/><rect x="618" y="10" width="34" height="9"/><rect x="656" y="10" width="28" height="9"/><rect x="692" y="10" width="6" height="4"/><rect x="712" y="10" width="50" height="9"/><rect x="766" y="10" width="32" height="9"/>
</g>
<g filter="url(#gb4)"><rect x="862" y="12" width="16" height="14" fill="#5a64c8" opacity=".55"/><rect x="824" y="14" width="20" height="10" fill="#fff" opacity=".5"/><rect x="870" y="6" width="24" height="8" fill="#fff" opacity=".35"/><rect x="640" y="3" width="60" height="6" fill="#fff" opacity=".3"/><rect x="500" y="3" width="40" height="5" fill="#fff" opacity=".3"/></g>
</svg>
<div class="gl" style="left:0;top:52px;width:1680px;height:2px;background:#5d6650"></div>
<div class="gl" style="left:0;top:54px;width:1680px;height:3px;background:linear-gradient(180deg,#f4f4f4,#c9c9c9)"></div>
</div>
<svg class="abs" style="left:0;top:16px" width="72" height="37" viewBox="0 16 72 37">
<defs><linearGradient id="bk" x1="0" y1="0" x2="0" y2="1"><stop offset="0" stop-color="#cdd2b0" stop-opacity=".75"/><stop offset=".5" stop-color="#c3c9a2" stop-opacity=".7"/><stop offset=".52" stop-color="#aab183" stop-opacity=".7"/><stop offset="1" stop-color="#b4ba90" stop-opacity=".7"/></linearGradient></defs>
<circle cx="20" cy="37.500" r="17.800" fill="url(#bk)" stroke="#666e50" stroke-width="1"/>
<circle cx="55" cy="37.500" r="12" fill="url(#bk)" stroke="#666e50" stroke-width="1"/>
<path d="M30 37.500H13M20.500 29l-9 8.500 9 8.500" fill="none" stroke="#eaebdc" stroke-width="5" stroke-linejoin="miter"/>
<path d="M48 37.500h13M56 31.500l6 6-6 6" fill="none" stroke="#e4e6d4" stroke-width="3.200"/>
</svg>
<div class="abs" style="left:71px;top:26px;width:747px;height:24px;box-sizing:border-box;border:1px solid #6c7456;background:linear-gradient(90deg,#d9dbbd 0,#d6d9b8 230px,#e4e7e2 330px,#e6e9ee 100%)"></div>
<svg class="abs" style="left:300px;top:27px" width="520" height="22" viewBox="300 27 520 22"><g filter="url(#gb4)" fill="#7a86a0" opacity=".38"><rect x="345" y="36" width="30" height="8"/><rect x="392" y="36" width="30" height="8"/><rect x="438" y="36" width="44" height="8"/><rect x="500" y="36" width="42" height="8"/><rect x="560" y="36" width="36" height="8"/><rect x="612" y="36" width="30" height="8"/><rect x="660" y="36" width="30" height="8"/></g></svg>
<div class="abs" style="left:75.5px;top:30px;width:17.5px;height:17.5px">
<div style="position:absolute;left:-1.0px;top:-7.3px;width:19.4px;height:17.5px;font:bold 26.2px/26.2px 'Liberation Sans',sans-serif;color:#3a9ae6;text-align:center;letter-spacing:0;transform:scaleX(1.08)">e</div>
<svg style="position:absolute;left:-1.9px;top:-1.9px" width="21.4" height="21.4" viewBox="0 0 22 22"><path d="M4 19.500C-.5 13 4.500 4.500 19.500 2.500 9.500 5 3.500 11 4 19.500z" fill="#f7b614" stroke="#f7b614" stroke-width=".8" stroke-linejoin="round"/></svg>
</div>
<div style="left:96.50px;top:31.00px;font-size:13px;line-height:15px;letter-spacing:-0.191px;color:#77786a;"><span style="color:#111">https</span>://beta.<span style="color:#111">intimamedia.com</span>/#</div>
<svg class="abs" style="left:715px;top:28px" width="100" height="20" viewBox="715 28 100 20" fill="none" stroke="#555" stroke-width="1.8">
<circle cx="726.5" cy="36.5" r="4"/><path d="M723.5 40l-4.5 4.5"/>
<path d="M736 37h7l-3.5 3.5z" fill="#555" stroke="none"/>
<rect x="752" y="37" width="9" height="7" fill="#555" stroke="none"/><path d="M754 37v-2.5a2.5 2.5 0 015 0V37" stroke-width="1.5"/>
<rect x="768.5" y="33.500" width="8" height="10" stroke-width="1"/><path d="M769 40l2-2 2 2 3-3" stroke-width="1"/>
<path d="M793 35.500a4.500 4.500 0 10.800 4.500" stroke-width="1.600"/><path d="M790.500 32.500h4v4z" fill="#555" stroke="none"/>
<path d="M800 34l9 9M809 34l-9 9" stroke-width="2"/>
</svg>
<div class="abs" style="left:820px;top:26px;width:199px;height:28px;box-sizing:border-box;border:1px solid #7d838c;border-bottom:none;background:linear-gradient(180deg,#fff,#f3f6fb)"></div>
<div class="abs" style="left:825px;top:31px;width:17px;height:17px">
<div style="position:absolute;left:-0.9px;top:-7.1px;width:18.9px;height:17px;font:bold 25.5px/25.5px 'Liberation Sans',sans-serif;color:#3a9ae6;text-align:center;letter-spacing:0;transform:scaleX(1.08)">e</div>
<svg style="position:absolute;left:-1.9px;top:-1.9px" width="20.8" height="20.8" viewBox="0 0 22 22"><path d="M4 19.500C-.5 13 4.500 4.500 19.500 2.500 9.500 5 3.500 11 4 19.500z" fill="#f7b614" stroke="#f7b614" stroke-width=".8" stroke-linejoin="round"/></svg>
</div>
<div style="left:846.00px;top:33.00px;font-size:13px;line-height:15px;letter-spacing:-0.319px;color:#111;">IntimaMedia.com - Intellig...</div>
<svg class="abs" style="left:1003px;top:34px" width="12" height="12" viewBox="0 0 12 12"><path d="M2 2l7.500 7.500M9.500 2L2 9.500" stroke="#8a8a8a" stroke-width="2" fill="none"/></svg>
<div class="abs" style="left:1019px;top:27px;width:30px;height:26px;box-sizing:border-box;border:1px solid #7d838c;border-bottom:none;background:linear-gradient(180deg,#d8dbe0,#aeb2b8)"></div>
<div class="abs" style="left:1574px;top:0;width:104px;height:18px;box-sizing:border-box;border:1px solid #4c4f3c;border-top:none;border-radius:0 0 5px 5px;overflow:hidden;background:linear-gradient(180deg,#e4e6d6 0,#d4d6c2 45%,#b4b6a0 52%,#cfd1c0 100%)">
<div style="position:absolute;left:27px;top:0;width:1px;height:18px;background:#6b6e5c"></div>
<div style="position:absolute;left:54px;top:0;width:49px;height:18px;border-left:1px solid #6b2a1e;background:linear-gradient(180deg,#eeb09a 0,#dc8466 45%,#c4401c 52%,#d25a34 80%,#e08a6a 100%)"></div>
</div>
<svg class="abs" style="left:1574px;top:0" width="104" height="18" viewBox="1574 0 104 18" fill="none">
<rect x="1583.500" y="8.500" width="11" height="4" fill="#fff" stroke="#4a4f6a"/>
<rect x="1612.500" y="2.500" width="8" height="8" rx="1" stroke="#4a4f6a" fill="#f4f4f4"/><rect x="1609.500" y="5.500" width="8" height="8" rx="1" stroke="#4a4f6a" fill="#f4f4f4"/><rect x="1612.500" y="8.500" width="2" height="2" fill="#ddd" stroke="#4a4f6a"/>
</svg>
<div style="left:1647.50px;top:-4.50px;font-size:19px;line-height:21px;letter-spacing:0.000px;color:#fff;font-weight:bold;text-shadow:0 0 2px #5a2a20,0 0 1px #5a2a20;transform:scale(1.25,.95);">x</div>
<svg class="abs" style="left:1600px;top:26px" width="76" height="24" viewBox="1600 26 76 24" fill="#fff" stroke="#555" stroke-width="1">
<path d="M1607.500 39.500l7-7 7 7h-2v6.500h-3.500v-5h-3v5h-3.500v-6.500z"/>
<path d="M1639 30.500l2.300 5.200 5.700.5-4.300 3.700 1.300 5.600-5-3-5 3 1.300-5.600-4.300-3.700 5.700-.5z"/>
<circle cx="1664" cy="38.500" r="6.300" fill="none" stroke="#666" stroke-width="5" stroke-dasharray="3.100 1.850" stroke-dashoffset="1.500"/>
<circle cx="1664" cy="38.500" r="6.300" fill="none" stroke="#fff" stroke-width="3.400" stroke-dasharray="2.300 2.650" stroke-dashoffset="1.100"/>
<circle cx="1664" cy="38.500" r="5.200" fill="#fff" stroke="none"/>
<circle cx="1664" cy="38.500" r="2.700" fill="#c9cc9c" stroke="#666" stroke-width=".9"/>
</svg>
<div class="abs" style="left:0;top:1007px;width:1680px;height:2px;background:linear-gradient(180deg,#d4d4d4,#b4b4b4)"></div>
<div class="abs" style="left:0;top:1009px;width:1680px;height:41px;background:linear-gradient(180deg,#4c5230 0,#4c5230 1px,#8a9458 1px,#78843e 3px,#727e3a 50%,#6a7633 100%)"></div>
<div class="abs" style="left:0;top:1010px;width:160px;height:40px;background:linear-gradient(90deg,rgba(70,78,24,.6) 0,rgba(70,78,24,.6) 55px,rgba(70,78,24,0) 160px)"></div>
<div class="abs" style="left:700px;top:1009px;width:560px;height:41px;background:radial-gradient(ellipse at 50% 50%,rgba(150,160,100,.55),rgba(150,160,100,0) 70%)"></div>
<div class="abs" style="left:1432px;top:1009px;width:232px;height:41px;background:linear-gradient(90deg,rgba(150,154,130,0) 0,rgba(146,150,126,.7) 22px,rgba(140,146,116,.7) 150px,rgba(120,130,80,0) 205px)"></div>
<svg class="abs" style="left:5px;top:1008px" width="46" height="42" viewBox="0 0 46 42">
<defs><radialGradient id="orb" cx=".5" cy=".35" r=".7"><stop offset="0" stop-color="#7fc3ee"/><stop offset=".5" stop-color="#2c6fb5"/><stop offset="1" stop-color="#0e2f63"/></radialGradient></defs>
<circle cx="22" cy="21.500" r="18.500" fill="url(#orb)" stroke="#1c3050" stroke-width="1"/>
<path d="M12 14.500q4.500-2.500 9-.5l-1.600 7q-4.500-2-9 .5z" fill="#e8542a"/>
<path d="M22.500 14.500q4.500 2 9 -.5l-1.600 7q-4.500 2.500-9 .5z" fill="#8cc63e"/>
<path d="M10 23q4.500-2.500 9-.5l-1.600 7q-4.500-2-9 .5z" fill="#3a9be0"/>
<path d="M20.500 23q4.500 2 9-.5l-1.600 7q-4.500 2.500-9 .5z" fill="#f5c321"/>
<ellipse cx="22" cy="11" rx="14" ry="8" fill="#fff" opacity=".22"/>
</svg>
<div class="abs" style="left:60px;top:1010px;width:59px;height:39px;box-sizing:border-box;border:1px solid rgba(60,66,40,.8);border-radius:3px;box-shadow:inset 0 0 0 1px rgba(255,255,255,.35);background:linear-gradient(180deg,rgba(235,238,220,.85),rgba(200,206,170,.7) 50%,rgba(180,188,140,.7) 51%,rgba(205,210,175,.8))"></div>
<div class="abs" style="left:184px;top:1010px;width:58px;height:39px;box-sizing:border-box;border:1px solid rgba(60,66,40,.8);border-radius:3px;box-shadow:inset 0 0 0 1px rgba(255,255,255,.35);background:linear-gradient(180deg,rgba(170,178,130,.75),rgba(140,150,95,.6) 50%,rgba(125,136,80,.6) 51%,rgba(140,150,95,.7))"></div>
<div class="abs" style="left:246px;top:1010px;width:58px;height:39px;box-sizing:border-box;border:1px solid rgba(60,66,40,.8);border-radius:3px;box-shadow:inset 0 0 0 1px rgba(255,255,255,.35);background:linear-gradient(180deg,rgba(170,178,130,.75),rgba(140,150,95,.6) 50%,rgba(125,136,80,.6) 51%,rgba(140,150,95,.7))"></div>
<div class="abs" style="left:73px;top:1014px;width:32px;height:32px">
<div style="position:absolute;left:-1.8px;top:-13.3px;width:35.6px;height:32px;font:bold 48.0px/48.0px 'Liberation Sans',sans-serif;color:#3a9ae6;text-align:center;letter-spacing:0;transform:scaleX(1.08)">e</div>
<svg style="position:absolute;left:-3.6px;top:-3.6px" width="39.1" height="39.1" viewBox="0 0 22 22"><path d="M4 19.500C-.5 13 4.500 4.500 19.500 2.500 9.500 5 3.500 11 4 19.500z" fill="#f7b614" stroke="#f7b614" stroke-width=".8" stroke-linejoin="round"/></svg>
</div>
<svg class="abs" style="left:136px;top:1014px" width="32" height="32" viewBox="-16 -16 32 32">
<circle r="14.500" fill="#db4437"/>
<path d="M0 0L-12.560 -7.250A14.500 14.500 0 0 0 -1.500 14.420L6 4z" fill="#0f9d58"/>
<path d="M0 0L6 4 -1.500 14.420A14.500 14.500 0 0 0 14.350 -2.100L0 -2z" fill="#ffcd40"/>
<circle r="6.800" fill="#fff"/><circle r="5.300" fill="#4285f4"/>
</svg>
<div class="abs" style="left:198px;top:1015px;width:30px;height:29px;box-sizing:border-box;border:2px solid #2b4fa8;background:linear-gradient(135deg,#fff,#dfe6f5);font:italic bold 25px/24px 'Liberation Serif',serif;color:#2447a5;text-align:center;box-shadow:0 0 0 1px #e8ecf8 inset">W</div>
<svg class="abs" style="left:258px;top:1012px" width="36" height="34" viewBox="0 0 36 34">
<path d="M9 14L12 5l6 6q4-2 8 0l5-8 1 12q1 8-7 12-8 2-14-2-4-5-2-11z" fill="#857b6a" stroke="#3e382e" stroke-width="1"/>
<ellipse cx="6" cy="18.500" rx="5" ry="4" fill="#111"/>
<circle cx="16" cy="15" r="3.300" fill="#fff"/><circle cx="24" cy="15" r="3.300" fill="#fff"/><circle cx="16.500" cy="15.500" r="1.500" fill="#111"/><circle cx="23.500" cy="15.500" r="1.500" fill="#111"/>
<path d="M20 25l13 6" stroke="#c9a14a" stroke-width="2"/><path d="M30 29.500l4 2" stroke="#333" stroke-width="2.500"/>
</svg>
<div style="left:1463.50px;top:1021.50px;font-size:10.5px;line-height:12px;letter-spacing:-0.497px;color:#f2f2e6;">FR</div>
<svg class="abs" style="left:1488px;top:1016px" width="100" height="26" viewBox="1488 1016 100 26" fill="none">
<path d="M1493 1033l4.500-5 4.500 5z" fill="#eee"/>
<path d="M1515.500 1026.500h2.500l4-3.500v12l-4-3.500h-2.500z" fill="#f4f4f4" stroke="#444" stroke-width=".8"/>
<circle cx="1525" cy="1033" r="3.800" fill="#fff" stroke="#e0101a" stroke-width="1.600"/><path d="M1522.500 1030.500l5 5" stroke="#e0101a" stroke-width="1.600"/>
<path d="M1540 1022.500v15" stroke="#f4f4f4" stroke-width="2"/><path d="M1541.500 1023.500q3-2 5.500 0t5.500 0v7q-3 2-5.500 0t-5.500 0z" fill="#f4f4f4" stroke="#555" stroke-width=".7"/>
<rect x="1566.500" y="1025.500" width="10" height="8" fill="#d8dde2" stroke="#f4f4f4" stroke-width="1.500"/><path d="M1568 1037.500h8M1572 1034v3" stroke="#f4f4f4" stroke-width="1.500"/><rect x="1562.500" y="1022.500" width="4" height="7" fill="#444" stroke="#f4f4f4" stroke-width="1"/>
</svg>
<div style="left:1611.50px;top:1016.50px;font-size:12px;line-height:14px;letter-spacing:-0.507px;color:#fff;">14:55</div>
<div style="left:1595.50px;top:1033.50px;font-size:12px;line-height:14px;letter-spacing:-0.284px;color:#fff;">10/10/2012</div>
<div class="abs" style="left:1665px;top:1009px;width:15px;height:41px;box-sizing:border-box;border:1px solid #4c5432;background:linear-gradient(90deg,#6f7a3c,#59642c)"></div>
</body></html>
